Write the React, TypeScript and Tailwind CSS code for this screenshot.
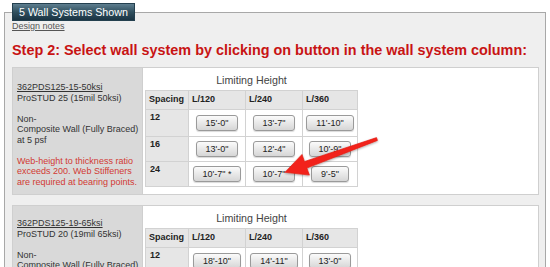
import React from "react";

type Row = { spacing: string; vals: string[] };

const Btn = ({ label }: { label: string }) => (
  <span className="inline-flex h-[16px] items-center justify-center whitespace-pre rounded-[3px] border border-[#9a9a9a] bg-gradient-to-b from-[#fbfbfb] to-[#d6d6d6] px-[9px] text-[9px] leading-[14px] text-[#222] shadow-[0_1px_1px_rgba(0,0,0,0.15)]">
    {label}
  </span>
);

const Block = ({
  code,
  name,
  rows,
  pt,
  red,
}: {
  code: string;
  name: string;
  rows: Row[];
  pt: string;
  red: boolean;
}) => (
  <div className="flex h-[128px] border border-[#cfcfcf] bg-white">
    <div className={`w-[129px] shrink-0 bg-[#d9d9d9] pl-[4px] text-[9px] leading-[10.5px] text-[#333] ${pt}`}>
      <div className="underline">{code}</div>
      <div>{name}</div>
      <div>&nbsp;</div>
      <div>Non-</div>
      <div>Composite Wall (Fully Braced)</div>
      <div>at 5 psf</div>
      <div>&nbsp;</div>
      {red && (
        <div className="text-[#d23a34]">
          <div>Web-height to thickness ratio</div>
          <div>exceeds 200. Web Stiffeners</div>
          <div>are required at bearing points.</div>
        </div>
      )}
    </div>
    <div className="flex-1 border-l border-[#cfcfcf] pl-[2px] pt-[6px]">
      <table className="border-collapse text-[9px] text-[#222]">
        <caption className="pb-[3px] text-[10.7px] leading-[13px] text-[#444]">Limiting Height</caption>
        <colgroup>
          <col className="w-[43px]" />
          <col className="w-[57px]" />
          <col className="w-[57px]" />
          <col className="w-[55px]" />
        </colgroup>
        <thead>
          <tr className="h-[19px] bg-[#e6e6e6]">
            {["Spacing", "L/120", "L/240", "L/360"].map((h) => (
              <th key={h} className="border border-[#d2d2d2] pl-[3px] text-left align-middle font-bold">
                {h}
              </th>
            ))}
          </tr>
        </thead>
        <tbody>
          {rows.map((r, i) => (
            <tr key={r.spacing} className={i === 0 ? "h-[27px]" : "h-[25px]"}>
              <td className="border border-[#d2d2d2] bg-[#e6e6e6] pl-[4px] pt-[2px] align-top font-bold leading-[11px]">
                {r.spacing}
              </td>
              {r.vals.map((v, j) => (
                <td key={j} className="border border-[#d2d2d2] text-center align-middle">
                  <Btn label={v} />
                </td>
              ))}
            </tr>
          ))}
        </tbody>
      </table>
    </div>
  </div>
);

export default function App() {
  return (
    <div className="relative h-[267px] w-[550px] overflow-hidden bg-white font-['Liberation_Sans',Arial,sans-serif]">
      <div className="px-[4px] pt-[3px]">
        <div className="relative z-10 ml-[8px] block h-[18px] w-fit border border-[#24404f] bg-gradient-to-b from-[#5e7e8f] via-[#30505f] to-[#1b3443] px-[6px] text-[10.7px] leading-[16px] text-white">
          5 Wall Systems Shown
        </div>
        <div className="-mt-[9px] h-[300px] border border-[#a8a8a8] bg-[#efefef] pl-[7px] pr-[6px] pt-[8px]">
          <div className="text-[9px] leading-[11px] text-[#555] underline">Design notes</div>
          <div className="mt-[10px] text-[14.4px] font-bold leading-[17px] text-[#c81414]">
            Step 2: Select wall system by clicking on button in the wall system column:
          </div>
          <div className="mt-[8px]">
            <Block
              code="362PDS125-15-50ksi"
              name="ProSTUD 25 (15mil 50ksi)"
              pt="pt-[14px]"
              red
              rows={[
                { spacing: "12", vals: ["15'-0\"", "13'-7\"", "11'-10\""] },
                { spacing: "16", vals: ["13'-0\"", "12'-4\"", "10'-9\""] },
                { spacing: "24", vals: ["10'-7\" *", "10'-7\"", "9'-5\""] },
              ]}
            />
          </div>
          <div className="mt-[10px]">
            <Block
              code="362PDS125-19-65ksi"
              name="ProSTUD 20 (19mil 65ksi)"
              pt="pt-[12px]"
              red={false}
              rows={[
                { spacing: "12", vals: ["18'-10\"", "14'-11\"", "13'-0\""] },
                { spacing: "16", vals: ["16'-4\"", "13'-0\"", "11'-4\""] },
                { spacing: "24", vals: ["13'-4\"", "11'-4\"", "9'-11\""] },
              ]}
            />
          </div>
        </div>
      </div>
      <svg className="pointer-events-none absolute left-0 top-0" width="550" height="267" viewBox="0 0 550 267">
        <defs>
          <filter id="sh" x="-20%" y="-20%" width="140%" height="140%">
            <feDropShadow dx="0" dy="1" stdDeviation="1" floodColor="#000" floodOpacity="0.35" />
          </filter>
        </defs>
        <polygon
          filter="url(#sh)"
          fill="#f2241a"
          stroke="#e01a10"
          strokeWidth="0.6"
          strokeLinejoin="round"
          points="285,172.3 302,154.4 304.5,161.5 376.5,137.6 377.5,140.4 306.9,168.1 309.4,175.1"
        />
      </svg>
    </div>
  );
}
